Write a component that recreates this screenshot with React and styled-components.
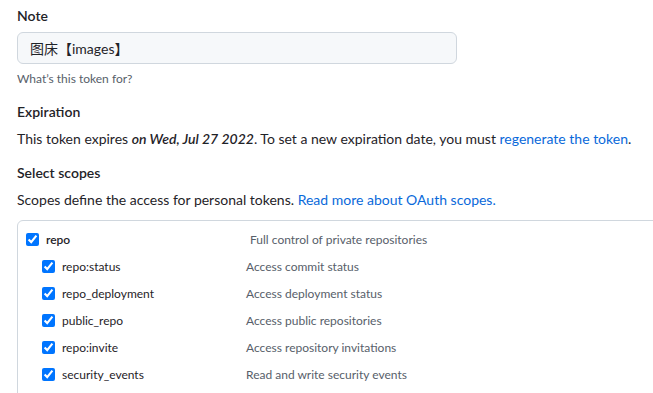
import React from "react";
import styled, { createGlobalStyle } from "styled-components";

const GlobalStyle = createGlobalStyle`
  body {
    margin: 0;
    background: #ffffff;
    font-family: "Segoe UI", Lato, "Noto Sans CJK SC", sans-serif;
    color: #1f2328;
    overflow: hidden;
  }
`;

const scopes = [
  { name: "repo:status", desc: "Access commit status" },
  { name: "repo_deployment", desc: "Access deployment status" },
  { name: "public_repo", desc: "Access public repositories" },
  { name: "repo:invite", desc: "Access repository invitations" },
  { name: "security_events", desc: "Read and write security events" },
];

export default function App() {
  return (
    <>
      <GlobalStyle />
      <Page>
        <Group>
          <Label>Note</Label>
          <Input defaultValue="图床【images】" />
          <Hint>What’s this token for?</Hint>
        </Group>

        <Group>
          <Label>Expiration</Label>
          <Text>
            This token expires <em>on Wed, Jul 27 2022</em>. To set a new
            expiration date, you must <Link href="#">regenerate the token</Link>.
          </Text>
        </Group>

        <Group $last>
          <Label>Select scopes</Label>
          <Text>
            Scopes define the access for personal tokens.{" "}
            <Link href="#">Read more about OAuth scopes.</Link>
          </Text>
        </Group>

        <ScopeBox>
          <ScopeRow $parent>
            <Name $parent>
              <Check type="checkbox" defaultChecked />
              repo
            </Name>
            <Desc $parent>Full control of private repositories</Desc>
          </ScopeRow>
          {scopes.map((s) => (
            <ScopeRow key={s.name}>
              <Name>
                <Check type="checkbox" defaultChecked />
                {s.name}
              </Name>
              <Desc>{s.desc}</Desc>
            </ScopeRow>
          ))}
        </ScopeBox>
      </Page>
    </>
  );
}

const Page = styled.div`
  padding: 6px 0 0 17px;
  display: flex;
  flex-direction: column;
`;

const Group = styled.div`
  display: flex;
  flex-direction: column;
  margin-bottom: ${(p) => (p.$last ? "10px" : "14px")};
`;

const Label = styled.div`
  font-size: 14px;
  font-weight: 600;
  line-height: 20px;
  margin-bottom: 6px;
`;

const Input = styled.input`
  width: 440px;
  height: 32px;
  box-sizing: border-box;
  padding: 5px 12px;
  font-size: 14px;
  font-family: inherit;
  color: #1f2328;
  background: #f6f8fa;
  border: 1px solid #d0d7de;
  border-radius: 6px;
  outline: none;
`;

const Hint = styled.div`
  font-size: 12px;
  color: #57606a;
  margin-top: 6px;
  line-height: 18px;
`;

const Text = styled.p`
  margin: 0;
  font-size: 14px;
  line-height: 21px;
  em {
    font-weight: 600;
    font-style: italic;
  }
`;

const Link = styled.a`
  color: #0969da;
  text-decoration: none;
`;

const ScopeBox = styled.div`
  width: 700px;
  border: 1px solid #d0d7de;
  border-radius: 6px;
  padding: 5px 0 30px 8px;
  display: flex;
  flex-direction: column;
`;

const ScopeRow = styled.div`
  display: flex;
  align-items: center;
  height: 27px;
  padding-left: ${(p) => (p.$parent ? "0" : "16px")};
  font-size: 12px;
`;

const Name = styled.label`
  display: flex;
  align-items: center;
  width: ${(p) => (p.$parent ? "224px" : "204px")};
  font-weight: ${(p) => (p.$parent ? 600 : 400)};
  color: #1f2328;
`;

const Check = styled.input`
  accent-color: #0075ff;
  width: 13px;
  height: 13px;
  margin: 0 7px 0 0;
`;

const Desc = styled.span`
  color: #57606a;
`;
